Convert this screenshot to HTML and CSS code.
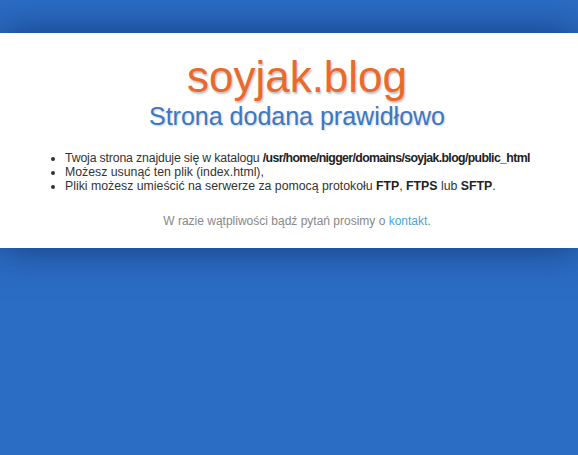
FILE: index.html
```html
<!DOCTYPE html>
<html lang="pl">
<head>
<meta charset="utf-8">
<title>soyjak.blog</title>
<link rel="stylesheet" href="styles.css">
</head>
<body>
<div class="band">
  <div class="inner">
    <h1 class="title">soyjak.blog</h1>
    <h2 class="subtitle">Strona dodana prawidłowo</h2>
    <ul class="info">
      <li class="first">Twoja strona znajduje się w katalogu <b class="path">/usr/home/nigger/domains/soyjak.blog/public_html</b></li>
      <li>Możesz usunąć ten plik (index.html),</li>
      <li>Pliki możesz umieścić na serwerze za pomocą protokołu <b>FTP</b>, <b>FTPS</b> lub <b>SFTP</b>.</li>
    </ul>
    <p class="note">W razie wątpliwości bądź pytań prosimy o <a href="#">kontakt</a>.</p>
  </div>
</div>
</body>
</html>
```
FILE: styles.css
```css
html, body {
  margin: 0;
  padding: 0;
}
body {
  background: #2b6cc4;
  font-family: "Liberation Sans", Arial, sans-serif;
  min-height: 455px;
}
.band {
  margin-top: 33px;
  height: 215px;
  background: #ffffff;
  box-shadow: 0 0 36px rgba(0, 20, 60, 0.55);
}
.inner {
  padding: 22px 9px 0 25px;
  text-align: center;
}
.title {
  margin: 0;
  font-size: 44px;
  line-height: 44px;
  font-weight: normal;
  color: #ea6a2c;
  text-shadow: 1px 2px 2px rgba(0, 0, 0, 0.25);
}
.subtitle {
  margin: 5px 0 0;
  font-size: 25px;
  line-height: 25px;
  font-weight: normal;
  color: #3a78c6;
  text-shadow: 1px 1px 2px rgba(0, 0, 0, 0.2);
}
.info {
  margin: 22px 0 0;
  padding-left: 40px;
  text-align: left;
  font-size: 12.3px;
  line-height: 14px;
  color: #333;
}
.info b {
  color: #222;
}
.info .first {
  letter-spacing: -0.16px;
}
.info .path {
  letter-spacing: -0.63px;
}
.note {
  margin: 21px 0 0;
  font-size: 12px;
  line-height: 14px;
  color: #888;
}
.note a {
  color: #4aa6d2;
  text-decoration: none;
}
```
